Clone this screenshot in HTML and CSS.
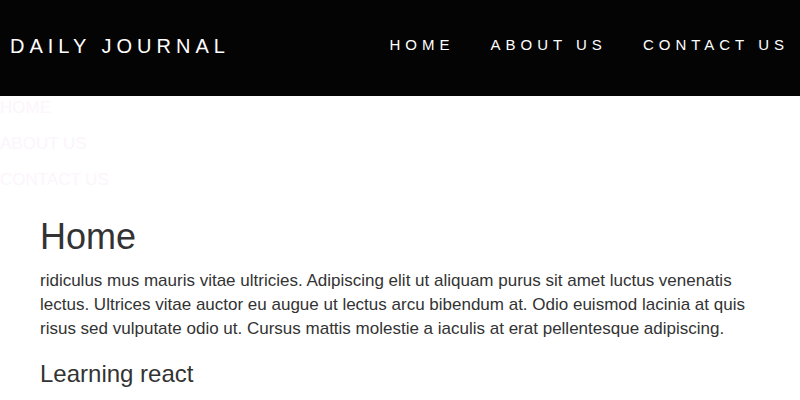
FILE: index.html
```html
<!DOCTYPE html>
<html>
<head>
<meta charset="utf-8">
<link rel="stylesheet" href="styles.css">
</head>
<body>
<header class="topbar">
  <div class="logo">DAILY JOURNAL</div>
  <nav class="nav">
    <a class="nav-link">HOME</a>
    <a class="nav-link">ABOUT US</a>
    <a class="nav-link">CONTACT US</a>
  </nav>
</header>
<ul class="ghost-menu">
  <li>HOME</li>
  <li>ABOUT US</li>
  <li>CONTACT US</li>
</ul>
<main class="content">
  <h1 class="title">Home</h1>
  <p class="text">ridiculus mus mauris vitae ultricies. Adipiscing elit ut aliquam purus sit amet luctus venenatis lectus. Ultrices vitae auctor eu augue ut lectus arcu bibendum at. Odio euismod lacinia at quis risus sed vulputate odio ut. Cursus mattis molestie a iaculis at erat pellentesque adipiscing.</p>
  <h3 class="subtitle">Learning react</h3>
</main>
</body>
</html>
```
FILE: styles.css
```css
html, body {
  margin: 0;
  padding: 0;
  background: #ffffff;
  font-family: "Liberation Sans", Arial, sans-serif;
  color: #333333;
}
.topbar {
  height: 96px;
  background: #050404;
  display: flex;
  align-items: center;
  justify-content: space-between;
  padding: 0 11px 0 10px;
  box-sizing: border-box;
}
.logo {
  color: #ffffff;
  font-size: 20px;
  letter-spacing: 5px;
  line-height: 24px;
  margin-top: -5px;
}
.nav {
  display: flex;
  gap: 36px;
  margin-top: -6px;
}
.nav-link {
  color: #ffffff;
  font-size: 15px;
  letter-spacing: 5px;
  line-height: 20px;
}
.ghost-menu {
  list-style: none;
  margin: 0;
  padding: 0;
  display: flex;
  flex-direction: column;
  gap: 14px;
  color: #fcf5fb;
  font-size: 17px;
}
.ghost-menu li {
  line-height: 22px;
}
.ghost-menu li:first-child {
  margin-top: 1px;
}
.content {
  padding: 26px 40px 0 40px;
}
.title {
  font-size: 36px;
  font-weight: normal;
  line-height: 1.1;
  margin: 0 0 12px 0;
}
.text {
  font-size: 17px;
  line-height: 24px;
  margin: 0 0 20px 0;
}
.subtitle {
  font-size: 24px;
  font-weight: normal;
  line-height: 1.1;
  margin: 0;
}
```
